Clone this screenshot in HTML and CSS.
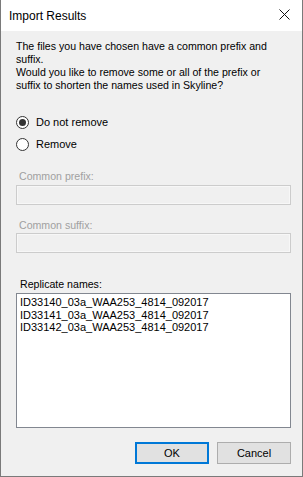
FILE: index.html
```html
<!DOCTYPE html>
<html lang="en">
<head>
  <meta charset="UTF-8">
  <title>Import Results</title>
  <link rel="stylesheet" href="styles.css">
</head>
<body>
  <div class="window">
    <!-- barra de titulo -->
    <header class="titlebar">
      <span class="title">Import Results</span>
      <svg class="close" width="11" height="11" viewBox="0 0 11 11">
        <path d="M0.5 0.5 L10.5 10.5 M10.5 0.5 L0.5 10.5" stroke="#111" stroke-width="1" fill="none"/>
      </svg>
    </header>

    <div class="content">
      <p class="message">
        The files you have chosen have a common prefix and<br>
        suffix.<br>
        Would you like to remove some or all of the prefix or<br>
        suffix to shorten the names used in Skyline?
      </p>

      <div class="options">
        <div class="radio"><span class="circle checked"></span>Do not remove</div>
        <div class="radio"><span class="circle"></span>Remove</div>
      </div>

      <div class="field disabled prefix">
        <div class="label">Common prefix:</div>
        <div class="textbox"></div>
      </div>

      <div class="field disabled suffix">
        <div class="label">Common suffix:</div>
        <div class="textbox"></div>
      </div>

      <div class="field names">
        <div class="label">Replicate names:</div>
        <div class="listbox">
          <div class="item">ID33140_03a_WAA253_4814_092017</div>
          <div class="item">ID33141_03a_WAA253_4814_092017</div>
          <div class="item">ID33142_03a_WAA253_4814_092017</div>
        </div>
      </div>

      <div class="buttons">
        <button class="default">OK</button>
        <button>Cancel</button>
      </div>
    </div>
  </div>
</body>
</html>
```

FILE: styles.css
```css
* {
  box-sizing: border-box;
  margin: 0;
  padding: 0;
}

body {
  font-family: 'Liberation Sans', Arial, sans-serif;
  font-size: 10.6px;
  color: #000;
  background: #f0f0f0;
}

.window {
  width: 303px;
  height: 477px;
  border: 1px solid #7a7a7a;
  border-top: none;
  background: #f0f0f0;
  display: flex;
  flex-direction: column;
}

.titlebar {
  height: 31px;
  background: #fff;
  display: flex;
  align-items: center;
  justify-content: space-between;
  padding: 0 12px 0 8px;
}

.title {
  font-size: 12px;
  color: #000;
}

.close {
  display: block;
  margin-top: -2px;
}

.content {
  flex: 1;
  padding: 9px 11px 0 15px;
  display: flex;
  flex-direction: column;
}

.message {
  line-height: 13px;
}

.options {
  margin-top: 22px;
  display: flex;
  flex-direction: column;
  gap: 6px;
}

.radio {
  height: 16px;
  display: flex;
  align-items: center;
  font-size: 11px;
}

.circle {
  width: 13px;
  height: 13px;
  border: 1px solid #333;
  border-radius: 50%;
  background: #fff;
  margin: 0 7px 0 0;
  display: flex;
  align-items: center;
  justify-content: center;
}

.circle.checked::after {
  content: '';
  width: 7px;
  height: 7px;
  border-radius: 50%;
  background: #333;
}

.label {
  line-height: 13px;
  padding-left: 3px;
  margin-bottom: 2px;
}

.field.disabled .label {
  color: #a0a0a0;
}

.prefix {
  margin-top: 18px;
}

.suffix {
  margin-top: 14px;
}

.suffix .label {
  margin-bottom: 1px;
}

.textbox {
  height: 20px;
  border: 1px solid #cccccc;
  box-shadow: inset 0 0 0 1px #f7f7f7;
  background: #f0f0f0;
}

.names {
  margin-top: 25px;
}

.names .label {
  padding-left: 4px;
}

.listbox {
  height: 135px;
  border: 1px solid #828790;
  background: #fff;
  padding: 2px 0 0 3px;
}

.item {
  line-height: 12.5px;
  font-size: 11px;
}

.buttons {
  margin-top: 14px;
  display: flex;
  justify-content: flex-end;
  gap: 8px;
}

button {
  width: 74px;
  height: 22px;
  font-family: inherit;
  font-size: 11px;
  color: #000;
  background: #e1e1e1;
  border: 1px solid #adadad;
}

button.default {
  border: 2px solid #0078d7;
}
```
